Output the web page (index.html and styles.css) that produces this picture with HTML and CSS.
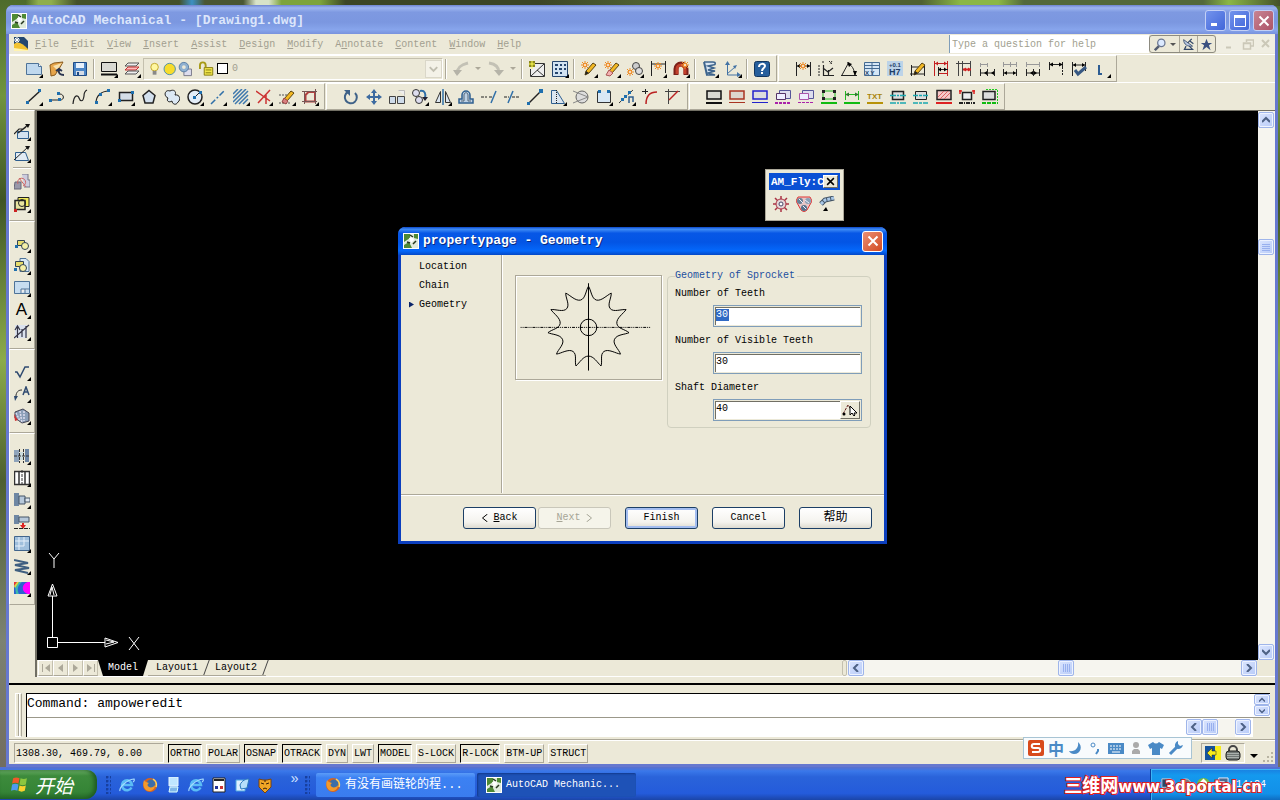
FILE: index.html
```html
<!DOCTYPE html>
<html lang="en">
<head>
    <meta charset="UTF-8">
    <meta name="viewport" content="width=device-width, initial-scale=1.0">
    <title>AutoCAD Mechanical - [Drawing1.dwg]</title>
    <link rel="stylesheet" href="styles.css">
</head>
<body>
    <!-- shared shapes -->
    <svg class="defs" width="0" height="0" aria-hidden="true">
        <symbol id="app" viewBox="0 0 16 16">
            <rect x=".5" y=".5" width="15" height="15" fill="#dfeadb" stroke="#fff"/>
            <path d="M1 1h6v4L1 9zM11 1h4v5l-4-1zM1 12l5-3 3 6H1z" fill="#4e8a35"/>
            <path d="M6 5l4-1 1 3-3 3z" fill="#fff"/>
            <path d="M7 2l3 2M10 11l3-3M4 9l3 1" stroke="#26361f" stroke-width="1.500" fill="none"/>
        </symbol>
        <symbol id="firefox" viewBox="0 0 16 16">
            <circle cx="8" cy="8" r="7" fill="#d9641c"/>
            <circle cx="9" cy="7" r="4.500" fill="#3c6ea8"/>
            <path d="M2 3c1 2 3 2 5 3-2 1-2 3 0 4s5 0 6-2c0 4-3 6-6 6C3 14 0 9 2 3z" fill="#f39a2b"/>
            <path d="M11 2c3 2 4 5 3 8" stroke="#ffd35a" stroke-width="1.500" fill="none"/>
        </symbol>
        <symbol id="ie" viewBox="0 0 16 16">
            <path d="M12.500 10.500A5 5 0 1 1 13 8H4" fill="none" stroke="#5bbcf5" stroke-width="2.600"/>
            <path d="M1 14C0 11 7 3 15 2c1 2-1 3-1 3" fill="none" stroke="#a5dcff" stroke-width="1.200"/>
        </symbol>
        <symbol id="grip-v" viewBox="0 0 8 8">
            <path d="M1.500 0v8M3.500 0v8M5.500 0v8M7.500 0v8" stroke="#98b0ee"/>
        </symbol>
        <symbol id="grip-h" viewBox="0 0 8 8">
            <path d="M0 1.500h8M0 3.500h8M0 5.500h8M0 7.500h8" stroke="#98b0ee"/>
        </symbol>
        <symbol id="left" viewBox="0 0 8 8"><path d="M6 0L2 4l4 4" fill="none" stroke="#4d6185" stroke-width="2"/></symbol>
        <symbol id="right" viewBox="0 0 8 8"><path d="M2 0l4 4-4 4" fill="none" stroke="#4d6185" stroke-width="2"/></symbol>
        <symbol id="up" viewBox="0 0 8 8"><path d="M0 6l4-4 4 4" fill="none" stroke="#4d6185" stroke-width="2"/></symbol>
        <symbol id="down" viewBox="0 0 8 8"><path d="M0 2l4 4 4-4" fill="none" stroke="#4d6185" stroke-width="2"/></symbol>
        <symbol id="close" viewBox="0 0 12 12"><path d="M1.500 1.500l9 9M10.500 1.500l-9 9" stroke="currentColor" stroke-width="2"/></symbol>
        <symbol id="spark" viewBox="0 0 16 16">
            <path d="M4 0v8M0 4h8M1 1l6 6M7 1L1 7" stroke="#ed8a22"/><circle cx="4" cy="4" r="1.500" fill="#fff" stroke="#ed8a22"/>
        </symbol>
        <symbol id="pencil" viewBox="0 0 16 16">
            <path d="M4 14l1-4 7-8 3 2-7 8z" fill="#f3b822" stroke="#5a4410"/><path d="M4 14l1-4 3 2z" fill="#222"/>
        </symbol>
    </svg>

    <main class="window">
        <header class="titlebar">
            <svg class="icon"><use href="#app"/></svg>
            <h1>AutoCAD Mechanical - [Drawing1.dwg]</h1>
            <button class="caption" aria-label="Minimize"><svg viewBox="0 0 12 12"><path d="M1 9.500h6" stroke="#fff" stroke-width="3"/></svg></button>
            <button class="caption" aria-label="Maximize"><svg viewBox="0 0 12 12"><path d="M.5 1v10.500h11V1" fill="none" stroke="#fff"/><path d="M0 1.500h12" stroke="#fff" stroke-width="3"/></svg></button>
            <button class="caption caption-close" aria-label="Close"><svg><use href="#close"/></svg></button>
        </header>

        <nav class="menubar">
            <svg class="icon" viewBox="0 0 16 16"><path d="M1 1h10l4 4v10H1z" fill="#24476f"/><path d="M1 8c4-3 8-1 14 5v2H1z" fill="#f2c230"/><path d="M1 12l14 2v1H1z" fill="#fff3b0"/><path d="M4 1v6M1 4h6M2 2l4 4M6 2L2 6" stroke="#fff"/></svg>
            <button><u>F</u>ile</button>
            <button><u>E</u>dit</button>
            <button><u>V</u>iew</button>
            <button><u>I</u>nsert</button>
            <button><u>A</u>ssist</button>
            <button><u>D</u>esign</button>
            <button><u>M</u>odify</button>
            <button>A<u>n</u>notate</button>
            <button><u>C</u>ontent</button>
            <button><u>W</u>indow</button>
            <button><u>H</u>elp</button>
            <input class="help-box" type="text" placeholder="Type a question for help" aria-label="Type a question for help">
            <div class="help-tools">
                <button class="search" aria-label="Search"><svg viewBox="0 0 16 16"><path d="M6 10l-5 5" stroke="#555d70" stroke-width="3"/><circle cx="9" cy="6" r="4.500" fill="#dceaff" stroke="#6a7690" stroke-width="1.500"/></svg><i class="arrow"></i></button>
                <button aria-label="Communication Center"><svg viewBox="0 0 16 16"><path d="M2 2c0 6 5 9 11 8z" fill="#b9c8e2" stroke="#334868"/><path d="M7 6l5-5M5 10l-2 4h10l-4-4M10 4l4 3" stroke="#334868" stroke-width="1.500" fill="none"/></svg></button>
                <button aria-label="Favorites"><svg viewBox="0 0 16 16"><path d="M8 1l2 5h5l-4 3 2 6-5-4-5 4 2-6-4-3h5z" fill="#3a5080"/></svg></button>
            </div>
            <div class="mdi">
                <button aria-label="Minimize drawing"><svg viewBox="0 0 12 12"><path d="M2 9.500h5" stroke-width="2"/></svg></button>
                <button aria-label="Restore drawing"><svg viewBox="0 0 12 12"><path d="M4.500 4V2h7v6H9M1.500 5h7v6h-7zM1 5.500h8" fill="none" stroke-width="1.500"/></svg></button>
                <button aria-label="Close drawing"><svg viewBox="0 0 12 12"><path d="M2 2l7 7M9 2L2 9" stroke-width="2"/></svg></button>
            </div>
        </nav>

        <div class="toolbars">
            <div class="toolbar">
                <button class="tool more" aria-label="New"><svg viewBox="0 0 16 16"><path d="M.5 2.500h12l3 3v8H.5z" fill="#bfd8ee" stroke="#4e7398"/><path d="M12.500 2.500v3h3" fill="#fff" stroke="#4e7398"/></svg></button>
                <button class="tool" aria-label="Open"><svg viewBox="0 0 16 16"><path d="M1 4l4-2 9-1-4 7-4 6-4 1z" fill="#e6a54a" stroke="#8a5a1c"/><path d="M4 5l9-3-5 7z" fill="#f7e2ae"/><path d="M15 14c-4 0-6-2-5-5M7 10l3-2 3 2" stroke="#2a3550" stroke-width="2" fill="none"/></svg></button>
                <button class="tool" aria-label="Save"><svg viewBox="0 0 16 16"><path d="M1.500 1.500h13v13h-13z" fill="#4c86c6" stroke="#1f4b85"/><path d="M4 2h8v5H4z" fill="#e8f1fb"/><path d="M4 10h8v4H4z" fill="#d5dce6"/><path d="M5 11h2v3H5z" fill="#1f4b85"/></svg></button>
                <span class="sep"></span>
                <button class="tool more" aria-label="Layer state"><svg viewBox="0 0 16 16"><path d="M.5 1.500h15v9H.5z" fill="#d9d9d2" stroke="#111"/><path d="M0 13.500h16" stroke="#111" stroke-width="2"/></svg></button>
                <button class="tool more" aria-label="Layer manager"><svg viewBox="0 0 16 16"><path d="M4 2h11l-3 3H1z" fill="#eee" stroke="#555"/><path d="M4 6h11l-3 3H1z" fill="#fbb" stroke="#c03030"/><path d="M4 10h11l-3 3H1z" fill="#eee" stroke="#555"/></svg></button>
                <div class="layer-box">
                    <svg viewBox="0 0 74 16">
                        <circle cx="8" cy="6" r="4" fill="#fff7a0" stroke="#c0a52a"/><path d="M6 10h4v4H6z" fill="#888"/>
                        <circle cx="24" cy="8" r="6" fill="#f7dc2b" stroke="#4d8ea8"/>
                        <path d="M39 8h8v7h-8z" fill="#dde" stroke="#778"/><circle cx="39" cy="6" r="5" fill="#8fb0d0" stroke="#5a7ea5"/><circle cx="39" cy="6" r="2" fill="#ece9d8"/>
                        <path d="M56 8V4a3 3 0 0 1 6 0v2" stroke="#a79a16" stroke-width="2" fill="none"/><path d="M60.500 6.500h9v8h-9z" fill="#f1e64a" stroke="#857b10"/><path d="M62 9h6M62 12h6" stroke="#857b10"/>
                    </svg>
                    <span class="swatch"></span>
                    <select aria-label="Layer"><option>0</option></select>
                    <svg class="drop" viewBox="0 0 16 16"><path d="M4 6l4 4 4-4" fill="none" stroke="#c0beb0" stroke-width="2"/></svg>
                </div>
                <span class="sep"></span>
                <button class="tool" aria-label="Undo"><svg viewBox="0 0 16 16"><path d="M4 13c0-6 3-9 11-11" fill="none" stroke="#c3c1b5" stroke-width="3"/><path d="M0 9h9l-5 6z" fill="#b5b3a8"/></svg></button><button class="tool-drop" aria-label="Undo list"><i class="arrow"></i></button>
                <button class="tool" aria-label="Redo"><svg viewBox="0 0 16 16"><path d="M1 2c8 1 10 5 10 10" fill="none" stroke="#c3c1b5" stroke-width="3"/><path d="M6 9h10l-5 6z" fill="#b5b3a8"/></svg></button><button class="tool-drop" aria-label="Redo list"><i class="arrow"></i></button>
                <span class="sep"></span>
                <button class="tool" aria-label="Power snap"><svg viewBox="0 0 16 16"><path d="M5.500 2.500h10v13H1.500V8" fill="#eee" stroke="#333"/><path d="M2 15L15 3M8 9l7 6" stroke="#333"/><path d="M0 0h6v6H0z" fill="#8b861d"/><path d="M0 3h6M3 0v8" stroke="#ff5"/></svg></button>
                <button class="tool more" aria-label="Calculator"><svg viewBox="0 0 16 16"><path d="M.5.5h15v15H.5z" fill="#d2e3f2" stroke="#26466e"/><path d="M3 3h3v2H3zM8 3h2v2H8zM12 3h2v2h-2zM3 7h2v2H3zM7 7h3v2H7zM12 7h2v2h-2zM3 11h3v2H3zM8 11h2v2H8z" fill="#26466e"/></svg></button>
                <span class="sep"></span>
                <button class="tool more" aria-label="Power edit"><svg viewBox="0 0 16 16"><use href="#pencil"/><use href="#spark"/></svg></button>
                <button class="tool more" aria-label="Power erase"><svg viewBox="0 0 16 16"><use href="#pencil"/><path d="M2 14l3-5 4 3-3 3z" fill="#f4b0b0" stroke="#a55"/><use href="#spark"/></svg></button>
                <button class="tool more" aria-label="Power copy"><svg viewBox="0 0 16 16"><circle cx="9" cy="5" r="3.500" fill="#ccc" stroke="#444"/><circle cx="12" cy="10" r="3.500" fill="#ddd" stroke="#444"/><use href="#spark" x="-1" y="7"/></svg></button>
                <button class="tool more" aria-label="Power dimension"><svg viewBox="0 0 16 16"><path d="M1.500 0v15M15.500 0v12M2 3h13" stroke="#222"/><use href="#spark" x="4" y="1"/></svg></button>
                <button class="tool more" aria-label="Power recall"><svg viewBox="0 0 16 16"><path d="M3 14V8a5 5 0 0 1 10 0v6" fill="none" stroke="#7c2018" stroke-width="5"/><path d="M4 13V8a4 4 0 0 1 8 0v5" fill="none" stroke="#c2402c" stroke-width="3"/><use href="#spark" x="8"/></svg></button>
                <span class="sep"></span>
                <button class="tool more" aria-label="Structure"><svg viewBox="0 0 16 16"><path d="M2 1h9c3 0 3 3 0 3l-5 1 6 2-6 2 7 1-7 2 7 2H4" fill="#d8e5f2" stroke="#3e648c" stroke-width="1.500"/><path d="M2 1l3 13" stroke="#3e648c" stroke-width="2"/></svg></button>
                <button class="tool more" aria-label="UCS"><svg viewBox="0 0 16 16"><path d="M2.500 2v12H14M2 13l8-7" stroke="#4373a5" fill="none"/><path d="M0 4l2.500-4L5 4zM12 11l4 3-4 2zM8 5l4-1-2 4z" fill="#4373a5"/></svg></button>
                <span class="sep"></span>
                <button class="tool" aria-label="Help"><svg viewBox="0 0 16 16"><rect x=".5" y=".5" width="15" height="15" rx="2" fill="#265f9c" stroke="#12365f"/><path d="M5 6c0-4 6-4 6-1 0 2-3 2-3 5M8 11v2" stroke="#fff" stroke-width="2" fill="none"/></svg></button>
            </div>
            <div class="toolbar">
                <button class="tool" aria-label="Power dimensioning"><svg viewBox="0 0 16 16"><path d="M1.500 1v14M15.500 1v14M2 5h13" stroke="#222"/><path d="M2 5l3-2v4zM15 5l-3-2v4z"/><use href="#spark" x="4" y="1"/></svg></button>
                <button class="tool" aria-label="Multiple dimensions"><svg viewBox="0 0 16 16"><path d="M5.500 4v11M5 14.500h11M5 7l5 4 5-4M10.500 9v5" stroke="#222" fill="none" stroke-width="1.200"/><path d="M5 0v3M14 0l-2 3M11 0l3 3M1 4v11" stroke="#222" stroke-dasharray="2 1"/></svg></button>
                <button class="tool" aria-label="Angle dimension"><svg viewBox="0 0 16 16"><path d="M0 14.500h16M1 14L8 1M7 3c4 1 6 5 7 11" stroke="#222" fill="none"/><path d="M6 1l5 2-3 3zM12 10h4l-2 5z"/></svg></button>
                <button class="tool" aria-label="Coordinate table"><svg viewBox="0 0 16 16"><path d="M.5 1.500h15v13H.5z" fill="#d5e6f5" stroke="#456b92"/><path d="M0 4.500h16M0 7.500h16M8 1v13" stroke="#456b92"/><text x="1" y="14">X Y</text></svg></button>
                <button class="tool" aria-label="Fits list"><svg viewBox="0 0 16 16"><path d="M0 0h16v15H0z" fill="#bcd3e8"/><text x="2" y="6">+0.1</text><text class="big" x="2" y="14">H7</text></svg></button>
                <button class="tool" aria-label="Edit dimension"><svg viewBox="0 0 16 16"><path d="M1.500 4v11M14.500 4v11M1 6h14M0 13h15" stroke="#222"/><use href="#pencil"/></svg></button>
                <button class="tool" aria-label="Arrange dimensions"><svg viewBox="0 0 16 16"><path d="M1.500 0v15M14.500 0v15M2 2.500h12M5 12.500h9" stroke="#c32020"/><path d="M5.500 6v9M5 8.500h10" stroke="#222"/><path d="M2 2.500l3-2v4zM14 2.500l-3-2v4z" fill="#c32020"/><path d="M5 8.500l3-2v4zM14 8.500l-3-2v4z"/></svg></button>
                <button class="tool" aria-label="Align dimensions"><svg viewBox="0 0 16 16"><path d="M2.500 0v15M6.500 0v15M14.500 0v15M0 2.500h14" stroke="#444"/><path d="M7 8.500h8" stroke="#d02020" stroke-width="2"/><path d="M7 8.500l3-2v4zM15 8.500l-3-2v4z" fill="#d02020"/></svg></button>
                <button class="tool" aria-label="Insert dimension"><svg viewBox="0 0 16 16"><path d="M1.500 2v4M8.500 2v4M1 3.500h8" stroke="#999"/><path d="M1.500 8v7M8.500 8v7M15.500 8v7M1 12h14" stroke="#222"/><path d="M5 12l3-2v4zM12 12l3-2v4z"/></svg></button>
                <button class="tool" aria-label="Join dimension"><svg viewBox="0 0 16 16"><path d="M1.500 1v5M8.500 1v5M14.500 1v5M1 3.500h14" stroke="#999"/><path d="M1.500 8v7M14.500 8v7M1 12h14" stroke="#222"/><path d="M2 12l3-2v4zM14 12l-3-2v4z"/></svg></button>
                <button class="tool" aria-label="Break dimension"><svg viewBox="0 0 16 16"><path d="M1.500 1v5M14.500 1v5M1 3.500h14" stroke="#999"/><path d="M1.500 8v7M8.500 8v7M14.500 8v7M1 12h14" stroke="#222"/><path d="M5 12l3-2v4zM12 12l-3-2v4z"/></svg></button>
                <button class="tool" aria-label="Linear dimension"><svg viewBox="0 0 16 16"><path d="M1.500 1v8M14.500 1v7M1 3.500h14" stroke="#222"/><path d="M14.500 9v6" stroke="#222" stroke-dasharray="2 1"/><path d="M1 3.500l4-2v4zM15 3.500l-4-2v4z"/></svg></button>
                <button class="tool" aria-label="Check dimensions"><svg viewBox="0 0 16 16"><path d="M1.500 1v14M14.500 1v9M1 4h14" stroke="#222"/><path d="M2 4l3-2v4zM14 4l-3-2v4z"/><path d="M4 9l3 4 8-7" fill="none" stroke="#385983" stroke-width="3"/></svg></button>
                <button class="tool more" aria-label="Leader"><svg viewBox="0 0 16 16"><path d="M5 4v9h3" stroke="#2d5d93" stroke-width="2" fill="none"/></svg></button>
            </div>
        </div>

        <div class="toolbars">
            <div class="toolbar">
                <button class="tool more" aria-label="Line"><svg viewBox="0 0 16 16"><path d="M2 13L14 2" stroke="#222" stroke-width="1.500"/><path class="node" d="M0 12h3v3H0zM12 0h3v3h-3z"/></svg></button>
                <button class="tool" aria-label="Polyline"><svg viewBox="0 0 16 16"><path d="M1 11h10c5 0 4-6 0-6H9" stroke="#222" fill="none"/><path class="node" d="M0 10h3v3H0zM9 9h3v3H9zM8 3h3v3H8z"/></svg></button>
                <button class="tool" aria-label="Spline"><svg viewBox="0 0 16 16"><path d="M1 15C2 5 6 6 7 9s4 5 5-2c0-4 1-5 3-6" stroke="#222" fill="none" stroke-width="1.200"/></svg></button>
                <button class="tool more" aria-label="Arc"><svg viewBox="0 0 16 16"><path d="M1 14C1 7 6 2 14 2" stroke="#222" fill="none" stroke-width="1.200"/><path class="node" d="M0 12h3v3H0zM4 4h3v3H4zM12 0h3v3h-3z"/></svg></button>
                <button class="tool more" aria-label="Rectangle"><svg viewBox="0 0 16 16"><path d="M1.500 3.500h13v8h-13z" fill="#d5dee8" stroke="#222" stroke-width="1.500"/><path class="node" d="M0 10h3v3H0zM13 2h3v3h-3z"/></svg></button>
                <button class="tool" aria-label="Polygon"><svg viewBox="0 0 16 16"><path d="M8 1.500l6 5-2 7.500H4L2 6.500z" fill="#d3e0ee" stroke="#222" stroke-width="1.500"/></svg></button>
                <button class="tool" aria-label="Revision cloud"><svg viewBox="0 0 16 16"><path d="M4 9C-1 7 1 0 6 2c3-2 7 0 5 4 5-1 6 5 3 7-2 4-6 2-6-1-3 2-6 0-4-3z" fill="#dce8f4" stroke="#222"/></svg></button>
                <button class="tool more" aria-label="Circle"><svg viewBox="0 0 16 16"><circle cx="8" cy="8" r="7" fill="#e3edf7" stroke="#222" stroke-width="1.500"/><path d="M8 8l5-5" stroke="#222"/><path class="node" d="M6 7h3v3H6zM12 2h3v3h-3z"/></svg></button>
                <button class="tool more" aria-label="Construction line"><svg viewBox="0 0 16 16"><path d="M1 15L15 1" stroke="#2f6fa8" stroke-width="1.500" stroke-dasharray="6 2 2 2"/></svg></button>
                <button class="tool more" aria-label="Hatch"><svg viewBox="0 0 16 16"><path d="M0 5l5-5M0 9l9-9M0 13L13 0M2 15L15 2M6 15l9-9M10 15l5-5" stroke="#3d77ad" stroke-width="1.500"/></svg></button>
                <button class="tool more" aria-label="Trim lines"><svg viewBox="0 0 16 16"><path d="M0 2l14 10M14 1L2 14M10 6v9" stroke="#c33" stroke-width="1.500"/></svg></button>
                <button class="tool more" aria-label="Erase"><svg viewBox="0 0 16 16"><path d="M0 6h8M0 14h12" stroke="#555" stroke-dasharray="2 1"/><use href="#pencil"/><path d="M3 13l2-4 4 3-2 3z" fill="#d98080" stroke="#944"/></svg></button>
                <button class="tool more" aria-label="Contour"><svg viewBox="0 0 16 16"><path d="M3.500 12.500V6l3-3h6.500v9.500z" fill="none" stroke="#b04040" stroke-width="2"/><path d="M0 2.500h15M13.500 0v15M2.500 2v13M0 12.500h15" stroke="#755"/></svg></button>
            </div>
            <div class="toolbar">
                <button class="tool" aria-label="Rotate"><svg viewBox="0 0 16 16"><path d="M5 3a6 6 0 1 0 7 1" fill="none" stroke="#3f6288" stroke-width="2"/><path d="M1 1h6v6z" fill="#3f6288"/></svg></button>
                <button class="tool" aria-label="Move"><svg viewBox="0 0 16 16"><path d="M8 2v12M2 8h12" stroke="#3c6aa0" stroke-width="2"/><path d="M8 0l3 4H5zM8 16l3-4H5zM0 8l4-3v6zM16 8l-4-3v6z" fill="#3c6aa0"/></svg></button>
                <button class="tool" aria-label="Scale"><svg viewBox="0 0 16 16"><path d="M.5 7.500h6v7h-6zM8.500 7.500h7v7h-7z" fill="#cfdcea" stroke="#444"/><path d="M9.500 1.500h6v5" fill="#eee" stroke="#bbb"/></svg></button>
                <button class="tool more" aria-label="Copy"><svg viewBox="0 0 16 16"><circle cx="4" cy="4" r="3.500" fill="#dde" stroke="#333"/><circle cx="7" cy="11" r="3.500" fill="#dde" stroke="#333"/><path d="M8 2c5-1 6 3 5 7" stroke="#2f6fa8" stroke-width="2" fill="none"/><path d="M10 8h6l-3 4z" fill="#223"/></svg></button>
                <button class="tool more" aria-label="Mirror"><svg viewBox="0 0 16 16"><path d="M.5 13.500l5-11v11zM15.500 13.500l-5-11v11z" fill="#dce6f0" stroke="#333"/><path d="M8 0v16" stroke="#2f6fa8" stroke-width="1.500"/></svg></button>
                <button class="tool" aria-label="Offset"><svg viewBox="0 0 16 16"><path d="M1 14v-4h3V6a4 4 0 0 1 8 0v4h3v4z" fill="#bcd1e6" stroke="#2f5f8f" stroke-width="1.500"/><path d="M3 12h3V6c0-3 4-3 4 0v6h3" fill="none" stroke="#567"/></svg></button>
                <button class="tool" aria-label="Extend"><svg viewBox="0 0 16 16"><path d="M0 8h6M8 8h3" stroke="#222" stroke-dasharray="3 1"/><path d="M10 14l5-12" stroke="#2f6fa8" stroke-width="1.500"/></svg></button>
                <button class="tool" aria-label="Trim"><svg viewBox="0 0 16 16"><path d="M0 8h5M8 8h8" stroke="#222" stroke-dasharray="3 1"/><path d="M4 14L9 2" stroke="#2f6fa8" stroke-width="1.500"/></svg></button>
                <button class="tool" aria-label="Lengthen"><svg viewBox="0 0 16 16"><path d="M1 15L14 2" stroke="#222" stroke-width="1.500"/><path class="node" d="M0 13h3v3H0zM12 0h4v4h-4z"/></svg></button>
                <button class="tool more" aria-label="Stretch"><svg viewBox="0 0 16 16"><path d="M1.500 1.500h5l8 13h-13z" fill="#dce6f0" stroke="#2f5f8f"/><path d="M6.500 1v14" stroke="#222" stroke-dasharray="1 1"/></svg></button>
                <button class="tool" aria-label="Break"><svg viewBox="0 0 16 16"><circle cx="9" cy="8" r="6" fill="#ddd" stroke="#666"/><path d="M0 2l15 6L0 14" stroke="#888" fill="none"/></svg></button>
                <button class="tool more" aria-label="Join"><svg viewBox="0 0 16 16"><path d="M4 2.500H1.500v11h13v-11H12" fill="#d8e8f5" stroke="#333"/><path class="node" d="M2 1h3v3H2zM11 1h3v3h-3z"/></svg></button>
                <button class="tool more" aria-label="Array"><svg viewBox="0 0 16 16"><path d="M0 14L14 1" stroke="#333" stroke-dasharray="3 1"/><path d="M10 14V8h4v5" stroke="#2f5f8f" fill="none" stroke-width="1.500"/><path class="node" d="M2 9h3v3H2zM5 6h3v3H5zM9 2h3v3H9z"/></svg></button>
                <button class="tool" aria-label="Fillet"><svg viewBox="0 0 16 16"><path d="M0 2.500h6M3.500 0v5" stroke="#222"/><path d="M4 15c0-8 3-12 11-12" fill="none" stroke="#b22" stroke-width="1.500"/></svg></button>
                <button class="tool" aria-label="Chamfer"><svg viewBox="0 0 16 16"><path d="M0 2.500h15M3.500 0v15" stroke="#444"/><path d="M4 11l9-9" stroke="#b22" stroke-width="1.500"/></svg></button>
            </div>
            <div class="toolbar">
                <button class="tool" aria-label="Contour layer"><svg viewBox="0 0 16 16"><path d="M1 2h14v8H1z" fill="#d9d9d2" stroke="#111" stroke-width="1.500"/><path d="M0 14h16" stroke="#111" stroke-width="2"/></svg></button>
                <button class="tool" aria-label="Section layer"><svg viewBox="0 0 16 16"><path d="M1 2h14v8H1z" fill="#ddd5cc" stroke="#a93422" stroke-width="1.500"/><path d="M0 13.500h16" stroke="#a93422"/></svg></button>
                <button class="tool" aria-label="Thread layer"><svg viewBox="0 0 16 16"><path d="M1 2h14v8H1z" fill="#ddd" stroke="#22c" stroke-width="1.500"/><path d="M0 13.500h16" stroke="#22c"/></svg></button>
                <button class="tool" aria-label="Hidden layer"><svg viewBox="0 0 16 16"><path d="M4.500 1.500h11v8h-11z" fill="#dde" stroke="#559"/><path d="M1.500 4.500h9v6h-9z" fill="#eef" stroke="#536"/><path d="M0 14h16" stroke="#a2a" stroke-width="2" stroke-dasharray="3 1"/></svg></button>
                <button class="tool" aria-label="Hidden narrow layer"><svg viewBox="0 0 16 16"><path d="M4.500 1.500h11v8h-11z" fill="#dde" stroke="#559"/><path d="M1.500 4.500h9v6h-9z" fill="#eef" stroke="#a5a"/><path d="M0 13.500h16" stroke="#a2a" stroke-dasharray="3 1"/></svg></button>
                <button class="tool" aria-label="Frame layer"><svg viewBox="0 0 16 16"><path d="M2 2h12v8H2z" fill="none" stroke="#2b2"/><path d="M1 1h3v3H1zM12 1h3v3h-3zM1 8h3v3H1zM12 8h3v3h-3z" fill="#222"/><path d="M0 14h16" stroke="#1b1" stroke-width="2"/></svg></button>
                <button class="tool" aria-label="Dimension layer"><svg viewBox="0 0 16 16"><path d="M1.500 2v9M14.500 2v9M1 5.500h14" stroke="#2b2"/><path d="M1 5.500l4-2v4zM15 5.500l-4-2v4z" fill="#373"/><path d="M0 14h16" stroke="#1b1" stroke-width="2"/></svg></button>
                <button class="tool" aria-label="Text layer"><svg viewBox="0 0 16 16"><text class="txt" x="0" y="10">TXT</text><path d="M0 14h16" stroke="#b79208" stroke-width="2"/></svg></button>
                <button class="tool" aria-label="Centerline layer"><svg viewBox="0 0 16 16"><path d="M2.500 2.500h11v8h-11z" fill="#ddd" stroke="#222" stroke-width="1.500"/><path d="M0 6.500h16M0 14h16" stroke="#1aa8b0" stroke-width="1.500" stroke-dasharray="6 1 2 1"/></svg></button>
                <button class="tool" aria-label="Centerline narrow layer"><svg viewBox="0 0 16 16"><path d="M2.500 2.500h11v8h-11z" fill="#ddd" stroke="#222"/><path d="M0 6.500h16M0 14h16" stroke="#1aa8b0" stroke-width="1.500" stroke-dasharray="5 1 3 1"/></svg></button>
                <button class="tool" aria-label="Hatch layer"><svg viewBox="0 0 16 16"><path d="M1 1.500h14v9H1z" fill="#f6caca" stroke="#222" stroke-width="1.500"/><path d="M2 8l6-6M4 10l8-8M8 10l6-6" stroke="#d66"/><path d="M0 14h16" stroke="#d22" stroke-width="2"/></svg></button>
                <button class="tool" aria-label="Section line layer"><svg viewBox="0 0 16 16"><path d="M3.500 3.500h9v7h-9z" fill="#eee" stroke="#222" stroke-width="1.500"/><path d="M1 1v4M15 1v4M0 2h3M13 2h3" stroke="#d22" stroke-width="1.500"/><path d="M0 14h16" stroke="#222" stroke-width="2" stroke-dasharray="4 1 1 1"/></svg></button>
                <button class="tool" aria-label="Phantom layer"><svg viewBox="0 0 16 16"><path d="M4 .5h11.500v12" fill="none" stroke="#2c2" stroke-dasharray="2 1"/><path d="M1 2.500h12v8H1z" fill="#ddd" stroke="#222" stroke-width="1.500"/><path d="M0 14h16" stroke="#1b1" stroke-width="2" stroke-dasharray="4 1"/></svg></button>
            </div>
        </div>

        <div class="workspace">
            <aside class="dock">
                <div class="dock-group">
                    <button class="tool more" aria-label="Zoom"><svg viewBox="0 0 16 16"><path d="M3.500 7.500h11v7h-11z" fill="#d3e2f0" stroke="#2f5f8f"/><path d="M0 10l5-5h4l6-5M4 9l8-6" stroke="#222" stroke-width="1.200" fill="none"/><path d="M11 0h5l-2 4z" fill="#111"/></svg></button>
                    <button class="tool more" aria-label="Pan"><svg viewBox="0 0 16 16"><path d="M1.500 6.500h10l3 8h-13z" fill="#e3ecf4" stroke="#2f5f8f"/><path d="M0 14L14 1" stroke="#222"/><path d="M11 0h5l-2 4z" fill="#111"/></svg></button>
                    <span class="sep-h"></span>
                    <button class="tool" aria-label="Associate"><svg viewBox="0 0 16 16"><path d="M8 0h6v6h2v7h-6" fill="#ccd" stroke="#778"/><path d="M1 8h6v7H0z" fill="#99a" stroke="#667"/><path d="M5 4l7 9M4 10a4 4 0 1 1 5 2" stroke="#c66" fill="none"/></svg></button>
                    <button class="tool more" aria-label="Hide situation"><svg viewBox="0 0 16 16"><path d="M4 1.500h11v9H4z" fill="#f1ea5b" stroke="#222"/><path d="M1 4.500h10v9H1z" fill="#e8e4a0" stroke="#222" stroke-width="1.500"/><circle cx="8" cy="7" r="3.500" fill="none" stroke="#222"/><path d="M0 13h3v3H0z" fill="#c22"/></svg></button>
                </div>
                <div class="dock-group">
                    <button class="tool more" aria-label="Insert block"><svg viewBox="0 0 16 16"><path d="M3.500 4.500h7v5h-7z" fill="#e6dc6c" stroke="#345"/><circle cx="11" cy="10" r="3.500" fill="#f4f0a8" stroke="#345"/><path class="node" d="M1 9h3v3H1z"/></svg></button>
                    <button class="tool more" aria-label="Make block"><svg viewBox="0 0 16 16"><path d="M6 .5h6l3 3v10H6z" fill="#d7e8f5" stroke="#4e7398"/><path d="M1.500 3.500h8v5h-8z" fill="#e6dc6c" stroke="#345"/><circle cx="9" cy="10" r="3.500" fill="#f4f0a8" stroke="#345"/><path class="node" d="M0 10h3v3H0z"/></svg></button>
                    <button class="tool more" aria-label="Title border"><svg viewBox="0 0 16 16"><path d="M.5 1.500h15v12H.5z" fill="#c7ddf0" stroke="#4e7398"/><path d="M7 13V9h8M11 9v4" stroke="#4e7398" fill="#eee"/></svg></button>
                    <button class="tool more letter" aria-label="Text">A</button>
                    <button class="tool more" aria-label="Detail view"><svg viewBox="0 0 16 16"><path d="M1 1h12v13H1z" fill="#dbe2ee"/><path d="M3.500 3v11M1 6l2.500-4L6 6M0 14L15 1M8 5v8M12 2v12" stroke="#334" fill="none" stroke-width="1.200"/></svg></button>
                </div>
                <div class="dock-group">
                    <button class="tool more" aria-label="Surface texture"><svg viewBox="0 0 16 16"><path d="M1 8h2l3 5 5-10h4" fill="none" stroke="#2f4a70" stroke-width="1.500"/></svg></button>
                    <button class="tool more" aria-label="Leader note"><svg viewBox="0 0 16 16"><path d="M2 12V9c1-4 3-5 6-5" fill="none" stroke="#333"/><path d="M0 10h4l-3 5z" fill="#2f4a70"/><path d="M9 9l3-8 3 8M10 6h4" stroke="#2f4a70" stroke-width="1.500" fill="none"/></svg></button>
                    <button class="tool more" aria-label="Part reference"><svg viewBox="0 0 16 16"><path d="M1 4l8-3 6 4v8l-7 2-7-5z" fill="#8b9fb8" stroke="#445"/><path d="M2 5l4 8M6 3l2 12M10 3v10" stroke="#dde" stroke-width="1.500" stroke-dasharray="2 1"/><path d="M0 6l4 6-3 1z" fill="#c33"/></svg></button>
                </div>
                <div class="dock-group">
                    <button class="tool more" aria-label="Screw connection"><svg viewBox="0 0 16 16"><path d="M0 2h5v12H0z" fill="#8fa4bb"/><path d="M6 4h4v8H6z" fill="#cdd"/><path d="M11 1h4v13h-4z" fill="#6d87a5"/><path d="M0 8h16M5.500 1v14M9.500 1v14" stroke="#333" stroke-dasharray="3 1"/></svg></button>
                    <button class="tool more" aria-label="Holes"><svg viewBox="0 0 16 16"><path d="M.5 1.500h15v13H.5z" fill="#fff" stroke="#333" stroke-width="1.500"/><path d="M5 1v13M11 1v13" stroke="#333" stroke-width="1.500"/><path d="M8 0v16" stroke="#333" stroke-dasharray="3 1"/></svg></button>
                    <button class="tool more" aria-label="Shaft generator"><svg viewBox="0 0 16 16"><path d="M0 1h5v13H0z" fill="#6e87a3"/><path d="M5 4h6v8H5z" fill="#b6c8da" stroke="#456"/><path d="M11 6h5v4h-5z" fill="#dde6ee" stroke="#456"/></svg></button>
                    <button class="tool" aria-label="Bearing calculation"><svg viewBox="0 0 16 16"><path d="M0 1h5v9H0z" fill="#6e87a3"/><path d="M5 3h10v5H5z" fill="#b6c8da" stroke="#456"/><path d="M9 9v4" stroke="#d22" stroke-width="2"/><path d="M6 11h6l-3 4z" fill="#d22"/><path d="M0 14.500h16" stroke="#222" stroke-dasharray="4 1"/></svg></button>
                    <button class="tool more" aria-label="Steel shapes"><svg viewBox="0 0 16 16"><path d="M.5.5h15v14H.5z" fill="#9fbfdc" stroke="#41658c"/><path d="M1 10h9V1M5 1v13M1 5h14" fill="none" stroke="#e6f0fa"/></svg></button>
                    <button class="tool more" aria-label="Springs"><svg viewBox="0 0 16 16"><path d="M0 2l14 3L1 7l14 3-14 2 13 3" fill="none" stroke="#3f5f80" stroke-width="2"/></svg></button>
                    <button class="tool more" aria-label="FEA"><svg viewBox="0 0 16 16"><path d="M0 2h16v12H0z" fill="#2b62cf"/><path d="M0 2h3L0 6z" fill="#e33"/><path d="M1 6l4-4h3c-5 4-5 8-3 12H2z" fill="#3db8ac"/><path d="M0 6l3-4h2L1 8z" fill="#e8d33a"/><path d="M16 2c-7-1-11 9-2 12h2z" fill="#f0f"/></svg></button>
                </div>
            </aside>

            <div class="viewport">
                <div class="canvas-row">
                    <div class="canvas">
                        <svg class="ucs" viewBox="0 0 94 98" fill="none" stroke="#fff">
                            <path d="M.5 84.500h10v10h-10zM5.500 84V43M11 89.500h47M1 43l4.500-12L10 43zM58 85l13 4.500L58 94zM3 42l2-8 2 8M59 87l8 2-8 2"/>
                            <path d="M2 0l5 6 5-6M7 6v9M82 84l10 13M92 84L82 97"/>
                        </svg>

                        <section class="palette">
                            <div class="palette-title"><span>AM_Fly:C</span><button aria-label="Close palette"><svg><use href="#close"/></svg></button></div>
                            <div class="palette-tools">
                                <button class="tool" aria-label="Sprocket"><svg viewBox="0 0 16 16"><path d="M8 0v16M0 8h16M2 2l12 12M14 2L2 14" stroke="#a34" stroke-width="1.500"/><circle cx="8" cy="8" r="5" fill="#e5d5d8" stroke="#a34"/><circle cx="8" cy="8" r="2" fill="#fff" stroke="#446"/></svg></button>
                                <button class="tool" aria-label="Belt"><svg viewBox="0 0 16 16"><path d="M2 1h12l2 4-5 9-3 2-3-2L0 5z" fill="#e7c6c6" stroke="#d33"/><circle cx="4" cy="5" r="3" fill="#667f95"/><circle cx="12" cy="5" r="3" fill="#8aa0b5"/><circle cx="8" cy="12" r="3" fill="#56708a"/><path d="M3 3l4 4M9 4l4 3M7 10l3 3" stroke="#eef"/></svg></button>
                                <button class="tool" aria-label="Chain"><svg viewBox="0 0 16 16"><path d="M2 8l4-4 9-2" stroke="#456" stroke-width="5" fill="none"/><path d="M2 8l4-4 9-2" stroke="#a9c8e8" stroke-width="3" stroke-dasharray="3 1" fill="none"/><path d="M4 15l3-4 2 4z"/></svg></button>
                            </div>
                        </section>

                        <form class="dialog">
                            <header class="dialog-title">
                                <svg class="icon"><use href="#app"/></svg>
                                <h2>propertypage - Geometry</h2>
                                <button type="button" class="dialog-close" aria-label="Close"><svg><use href="#close"/></svg></button>
                            </header>
                            <div class="dialog-body">
                                <ul class="pages">
                                    <li><a href="#location">Location</a></li>
                                    <li><a href="#chain">Chain</a></li>
                                    <li class="current"><a href="#geometry">Geometry</a></li>
                                </ul>
                                <div class="page">
                                    <div class="preview">
                                        <svg viewBox="361 166 440 314" fill="none" stroke="#000" stroke-width="3">
                                            <path d="M581 197C589 209 590 235 605 239C620 243 637 224 650 218C651 232 637 253 647 265C657 277 681 266 695 268C687 280 665 294 667 310C669 326 693 328 704 338C691 344 667 343 660 358C653 373 674 389 678 403C664 401 641 386 628 395C615 404 624 425 619 439C608 429 597 409 581 409C565 409 554 429 543 439C538 425 547 404 534 395C521 386 498 401 484 403C488 389 509 373 502 358C495 343 471 344 458 338C469 328 493 326 495 310C497 294 475 280 467 268C481 266 505 277 515 265C525 253 511 232 512 218C525 224 542 243 557 239C572 235 573 209 581 197z"/>
                                            <circle cx="581" cy="322" r="25"/>
                                            <path d="M581 188v265"/>
                                            <path d="M375 322h394" stroke-dasharray="3 3 3 3 9 3"/>
                                        </svg>
                                    </div>
                                    <fieldset>
                                        <legend>Geometry of Sprocket</legend>
                                        <label for="teeth">Number of Teeth</label>
                                        <div class="field"><input id="teeth" class="selected" type="text" value="30"></div>
                                        <label for="visible">Number of Visible Teeth</label>
                                        <div class="field"><input id="visible" type="text" value="30"></div>
                                        <label for="shaft">Shaft Diameter</label>
                                        <div class="field">
                                            <input id="shaft" type="text" value="40">
                                            <button type="button" aria-label="Pick diameter"><svg viewBox="0 0 16 12"><path d="M1 10l5-9 6 9" fill="none" stroke="#622" stroke-dasharray="3 1"/><path d="M8 2v9l2-2 2 3 1-1-1-2h3z" fill="#fff" stroke="#000"/><circle cx="2" cy="10" r="1.500"/></svg></button>
                                        </div>
                                    </fieldset>
                                </div>
                            </div>
                            <footer class="dialog-buttons">
                                <button type="button"><svg viewBox="0 0 8 8"><path d="M6.500 0l-5 4 5 4"/></svg><span><u>B</u>ack</span></button>
                                <button type="button" disabled><span><u>N</u>ext</span><svg viewBox="0 0 8 8"><path d="M1.500 0l5 4-5 4"/></svg></button>
                                <button type="button" class="default">Finish</button>
                                <button type="button">Cancel</button>
                                <button type="button" class="cjk" lang="zh">帮助</button>
                            </footer>
                        </form>
                    </div>
                    <div class="vscroll">
                        <button class="sb" aria-label="Scroll up"><svg><use href="#up"/></svg></button>
                        <span class="above"></span>
                        <button class="sb" aria-label="Vertical thumb"><svg><use href="#grip-h"/></svg></button>
                        <span class="below"></span>
                        <button class="sb" aria-label="Scroll down"><svg><use href="#down"/></svg></button>
                    </div>
                </div>

                <div class="tabs">
                    <div class="tab-nav">
                        <button aria-label="First tab"><svg viewBox="0 0 10 10"><path d="M1 1h1v8H1zM9 1v8L4 5z"/></svg></button>
                        <button aria-label="Previous tab"><svg viewBox="0 0 10 10"><path d="M7 1v8L2 5z"/></svg></button>
                        <button aria-label="Next tab"><svg viewBox="0 0 10 10"><path d="M2 1v8l5-4z"/></svg></button>
                        <button aria-label="Last tab"><svg viewBox="0 0 10 10"><path d="M8 1h1v8H8zM1 1v8l5-4z"/></svg></button>
                    </div>
                    <button class="tab active">Model</button>
                    <button class="tab">Layout1</button>
                    <button class="tab">Layout2</button>
                    <div class="hscroll">
                        <span class="splitter"></span>
                        <button class="sb" aria-label="Scroll left"><svg><use href="#left"/></svg></button>
                        <span class="before"></span>
                        <button class="sb" aria-label="Horizontal thumb"><svg><use href="#grip-v"/></svg></button>
                        <span class="after"></span>
                        <button class="sb" aria-label="Scroll right"><svg><use href="#right"/></svg></button>
                    </div>
                </div>
            </div>
        </div>

        <section class="command">
            <div class="command-grip"></div>
            <div class="command-box">
                <div class="command-history">
                    <output>Command: ampoweredit</output>
                    <div class="mini-scroll">
                        <button class="sb" aria-label="History up"><svg><use href="#up"/></svg></button>
                        <button class="sb" aria-label="History down"><svg><use href="#down"/></svg></button>
                    </div>
                </div>
                <div class="command-line">
                    <input type="text" aria-label="Command line">
                    <button class="sb" aria-label="Command left"><svg><use href="#left"/></svg></button>
                    <button class="sb" aria-label="Command thumb"><svg><use href="#grip-v"/></svg></button>
                    <span class="track"></span>
                    <button class="sb" aria-label="Command right"><svg><use href="#right"/></svg></button>
                </div>
            </div>
        </section>

        <footer class="statusbar">
            <div class="coords">1308.30, 469.79, 0.00</div>
            <button class="on">ORTHO</button>
            <button>POLAR</button>
            <button class="on">OSNAP</button>
            <button class="on">OTRACK</button>
            <button>DYN</button>
            <button>LWT</button>
            <button class="on">MODEL</button>
            <button>S-LOCK</button>
            <button class="on">R-LOCK</button>
            <button>BTM-UP</button>
            <button>STRUCT</button>
            <div class="status-tray">
                <svg viewBox="0 0 16 16"><path d="M0 1h10v14H0z" fill="#15539c"/><path d="M10 1h6v14h-6z" fill="#f7ec1b"/><path d="M7 3v3h4v4H7v3L2 8z" fill="#f7ec1b" stroke="#222" stroke-width=".5"/></svg>
                <svg viewBox="0 0 16 16"><path d="M4 8V5a4 4 0 0 1 8 0v3" fill="none" stroke="#444" stroke-width="2"/><rect x="1" y="6" width="14" height="9" rx="3" fill="#707674" stroke="#222"/><path d="M2 8.500h12M2 10.500h12M2 12.500h12" stroke="#aab0ad"/></svg>
            </div>
            <i class="arrow arrow-big"></i>
            <svg class="resize" viewBox="0 0 12 12"><path d="M9 1h2v2H9zM5 5h2v2H5zM9 5h2v2H9zM1 9h2v2H1zM5 9h2v2H5zM9 9h2v2H9z" fill="#b8b4a2"/></svg>
        </footer>
    </main>

    <div class="ime" lang="zh">
        <svg viewBox="0 0 16 16"><rect width="16" height="16" rx="2" fill="#d84b1c"/><path d="M12 4H6C3 4 3 8 6 8h4c3 0 3 4 0 4H4" stroke="#fff" stroke-width="2" fill="none"/></svg>
        <span>中</span>
        <svg viewBox="0 0 16 16"><path d="M10 2c5 4 3 12-4 12-2 0-4-1-5-3 6 1 10-3 9-9z" fill="#4a8ac6"/></svg>
        <svg viewBox="0 0 16 16"><circle cx="5" cy="5" r="2" fill="none" stroke="#4a8ac6"/><path d="M10 9v2l-2 3" stroke="#4a8ac6" stroke-width="2" fill="none"/></svg>
        <svg viewBox="0 0 16 16"><path d="M0 3h16v11H0z" fill="#4a8ac6"/><path d="M2 6h12M2 9h12" stroke="#fff" stroke-dasharray="2 1"/><path d="M4 12h8" stroke="#fff"/></svg>
        <svg viewBox="0 0 16 16"><circle cx="8" cy="5" r="3" fill="#aaa"/><path d="M4 14v-3l2-2h4l2 2v3z" fill="#aaa"/></svg>
        <svg viewBox="0 0 16 16"><path d="M5 2c2 2 4 2 6 0l5 3-2 4-2-1v7H4V8L2 9 0 5z" fill="#4a8ac6"/></svg>
        <svg viewBox="0 0 16 16"><path d="M2 14l7-7" stroke="#4a8ac6" stroke-width="3"/><path d="M10 1c-3 1-4 5-2 7s6 1 7-3l-3 1-2-2z" fill="#4a8ac6"/></svg>
    </div>

    <footer class="taskbar">
        <button class="start" lang="zh">
            <svg viewBox="0 0 18 18"><path d="M3 3c2-1 4-1 6 0L8 8C6 7 4 7 2 8z" fill="#f0592a"/><path d="M10 3c2 1 4 1 6 0l-1 6c-2 1-4 1-6 0z" fill="#8cc63f"/><path d="M2 9c2-1 4-1 6 0l-1 6c-2-1-4-1-6 0z" fill="#4d9bf0"/><path d="M9 10c2 1 4 1 6 0l-1 5c-2 1-4 1-6 0z" fill="#fbd12e"/></svg>
            开始
        </button>
        <div class="quick">
            <i class="dots"></i>
            <button aria-label="Internet Explorer"><svg><use href="#ie"/></svg></button>
            <button aria-label="Firefox"><svg><use href="#firefox"/></svg></button>
            <button aria-label="Computer"><svg viewBox="0 0 16 16"><path d="M4 0h9v9H4z" fill="#bfe6ff" stroke="#e8f7ff"/><path d="M5 10h8l-1 5H4z" fill="#7fb6e8" stroke="#dff"/></svg></button>
            <button aria-label="Browser"><svg><use href="#ie"/></svg></button>
            <button aria-label="Movie"><svg viewBox="0 0 16 16"><path d="M2 1h12v14H2z" fill="#fff" stroke="#222"/><path d="M3 3h10" stroke="#222" stroke-width="2"/><path d="M4 9h3v3H4z" fill="#239"/><path d="M9 9h3v3H9z" fill="#c33"/></svg></button>
            <button aria-label="Mail"><svg viewBox="0 0 16 16"><path d="M2 3h9v11H2z" fill="#dff1ff" stroke="#4fa5e0"/><path d="M6 8c2-5 6-6 9-6l-2 9-6 1z" fill="#b6dffb" stroke="#2a78bb"/></svg></button>
            <button aria-label="Tiger"><svg viewBox="0 0 16 16"><path d="M2 2l4 1h4l4-1v8l-6 6-6-6z" fill="#f0a526" stroke="#7a430c"/><path d="M4 6l3 1M12 6L9 7M8 3v2M6 12l2-1 2 1" stroke="#3c1e05" fill="none"/></svg></button>
            <span class="chevrons">»</span>
            <i class="dots"></i>
        </div>
        <button class="task" lang="zh"><svg><use href="#firefox"/></svg>有没有画链轮的程...</button>
        <button class="task pressed"><svg><use href="#app"/></svg>AutoCAD Mechanic...</button>
        <div class="tray">
            <svg viewBox="0 0 16 16"><path d="M2 2h10v9H2z" fill="#27496e" stroke="#ccd"/><path d="M6 11h8v3H6z" fill="#9ab"/></svg>
            <svg viewBox="0 0 16 16"><circle cx="8" cy="8" r="6" fill="#777" stroke="#ccc"/></svg>
            <svg viewBox="0 0 16 16"><circle cx="8" cy="8" r="7" fill="#74b943"/><path d="M8 3v8M4 7l4-4 4 4" stroke="#fff" stroke-width="2" fill="none"/></svg>
            <svg viewBox="0 0 16 16"><path d="M5 1h10v8H5zM1 5h10v8H1z" fill="#4b6b90" stroke="#eef"/></svg>
            <time>14:24</time>
        </div>
    </footer>
    <div class="watermark" lang="zh"><b>三维网</b>www.3dportal.cn</div>
</body>
</html>
```
FILE: styles.css
```css
* {
    box-sizing: border-box;
}

body {
    margin: 0;
    height: 100vh;
    overflow: hidden;
    display: flex;
    flex-direction: column;
    font: 10px/12px "Liberation Mono", "Noto Sans CJK SC", monospace;
    color: #000;
    background:
        linear-gradient(90deg, transparent 0 2%, #8fae4d 3% 4%, #44512a 6% 14%, #3c90c4 15%, #4a5733 16% 19%, #d8e3c8 20% 21%, #7da43c 22% 25%, #3c4626 27% 42%, #4f6132 50% 72%, #8bb745 75% 78%, #53693b 80% 94%, #8bb745 96%, #44512a) top / 100% 6px no-repeat,
        linear-gradient(#4e6b2b, #70943f 12%, #3f5526 25%, #8bab4c 45%, #4d5f31 60%, #7c8272 80%, #6f675b);
}

button,
input,
select {
    font: inherit;
    color: inherit;
    margin: 0;
    padding: 0;
    border: 0;
    border-radius: 0;
    background: none;
}

button {
    display: flex;
    align-items: center;
    justify-content: center;
    flex: none;
}

svg {
    display: block;
    flex: none;
}

.defs {
    position: absolute;
}

.icon {
    width: 16px;
    height: 16px;
}

.arrow {
    border: 3px solid transparent;
    border-top-color: #aca899;
    border-bottom: 0;
}

.arrow-big {
    border-width: 4px;
    border-bottom: 0;
    border-top-color: #000;
    margin-top: 6px;
}

/* main window */
.window {
    flex: 1;
    min-height: 0;
    margin: 5px 2px 0 6px;
    display: flex;
    flex-direction: column;
    border: 3px solid #6678cf;
    border-top: 0;
    border-radius: 7px 7px 0 0;
    background: #ece9d8;
}

.titlebar {
    height: 29px;
    margin: 0 -3px;
    padding: 2px 4px 0 5px;
    display: flex;
    align-items: center;
    gap: 2px;
    border-radius: 7px 7px 0 0;
    background: linear-gradient(#6e85d2, #9db5f0 10%, #7e99e1 25%, #7b97e0 60%, #87a5ec 85%, #7892dd);
}

.titlebar h1 {
    flex: 1;
    margin: 0 0 0 2px;
    font-size: 13px;
    line-height: 16px;
    color: #dce6fb;
}

.caption {
    width: 21px;
    height: 21px;
    margin-left: 1px;
    border: 1px solid #c3d0f6;
    border-radius: 3px;
    background: linear-gradient(135deg, #7393ec, #4166d9);
    color: #fff;
}

.caption svg {
    width: 12px;
    height: 12px;
}

.caption-close {
    background: linear-gradient(135deg, #c88492, #ad5468);
}

.menubar {
    height: 20px;
    padding-left: 4px;
    display: flex;
    align-items: center;
    color: #a29f90;
}

.menubar > button {
    padding: 2px 6px 0;
}

.help-box {
    width: 200px;
    height: 18px;
    margin-left: auto;
    padding: 0 2px;
    background: #fff;
    border-left: 1px solid #7f9db9;
}

.help-box::placeholder {
    color: #a29f90;
    opacity: 1;
}

.help-tools {
    display: flex;
    height: 18px;
    border: 1px solid #8d8b80;
    border-radius: 3px;
}

.help-tools button {
    width: 18px;
}

.help-tools button + button {
    border-left: 1px solid #aca899;
}

.help-tools .search {
    width: 29px;
    gap: 3px;
}

.help-tools svg {
    width: 13px;
    height: 13px;
}

.help-tools .arrow {
    border-top-color: #555;
}

.mdi {
    display: flex;
    padding-left: 5px;
    background: #f0eee2;
}

.mdi button {
    width: 18px;
    height: 18px;
}

.mdi svg {
    width: 12px;
    height: 12px;
    stroke: #cbc8b8;
}

/* toolbars */
.toolbars {
    display: flex;
    height: 28px;
    border-top: 1px solid #fff;
}

.toolbar {
    display: flex;
    align-items: center;
    margin-right: 1px;
    padding: 0 3px 0 12px;
    border: 1px solid #fff;
    border-right-color: #aca899;
    border-bottom-color: #aca899;
}

.tool {
    position: relative;
    width: 23px;
    height: 22px;
}

.tool svg {
    width: 16px;
    height: 16px;
    overflow: hidden;
}

.tool svg text {
    font: bold 6px "Liberation Sans", sans-serif;
    fill: #1d3d66;
}

.tool svg .big {
    font-size: 9px;
}

.tool svg .txt {
    font-size: 8px;
    fill: #a98509;
}

.tool.more::after {
    content: "";
    position: absolute;
    right: 2px;
    bottom: 2px;
    border: 2px solid #000;
    border-left-color: transparent;
    border-top-color: transparent;
}

.node {
    fill: #1f6fae;
}

.tool-drop {
    width: 12px;
    height: 22px;
}

.sep {
    width: 6px;
    height: 20px;
    flex: none;
    background: linear-gradient(90deg, transparent 2px, #aca899 2px 3px, #fff 3px 4px, transparent 4px);
}

.layer-box {
    display: flex;
    align-items: center;
    width: 300px;
    height: 22px;
    padding-left: 3px;
    border: 1px solid #c4c0ae;
    border-right-color: #fff;
    border-bottom-color: #fff;
    color: #a29f90;
}

.layer-box svg {
    width: 70px;
    height: 16px;
}

.swatch {
    width: 11px;
    height: 11px;
    margin-right: 4px;
    border: 1px solid #000;
    background: #fff;
}

.layer-box select {
    flex: 1;
    appearance: none;
}

.layer-box .drop {
    width: 17px;
    height: 18px;
    background: #f4f2e8;
    border: 1px solid #dad7c9;
}

/* work area */
.workspace {
    flex: 1;
    min-height: 0;
    display: flex;
}

.dock {
    width: 26px;
    flex: none;
}

.dock-group {
    display: flex;
    flex-direction: column;
    padding: 10px 0 5px;
    border: 1px solid #fff;
    border-right-color: #aca899;
    border-bottom-color: #aca899;
}

.dock-group + .dock-group {
    padding-top: 11px;
}

.sep-h {
    height: 6px;
    margin: 0 3px;
    background: linear-gradient(transparent 2px, #aca899 2px 3px, #fff 3px 4px, transparent 4px);
}

.letter {
    font: 17px/20px "Liberation Sans", sans-serif;
}

.viewport {
    flex: 1;
    min-width: 0;
    display: flex;
    flex-direction: column;
    border-left: 2px solid #716f64;
    border-top: 1px solid #716f64;
}

.canvas-row {
    flex: 1;
    display: flex;
}

.canvas {
    position: relative;
    flex: 1;
    background: #000;
}

.vscroll {
    display: flex;
    flex-direction: column;
    width: 17px;
    padding-top: 1px;
    background: #f6f5ef;
}

.above {
    flex: 2;
}

.below {
    flex: 7;
}

.sb {
    width: 16px;
    height: 16px;
    border: 1px solid #9fb5ea;
    border-radius: 2px;
    background: linear-gradient(135deg, #dbe5fe, #b8cbf8);
    box-shadow: inset 0 0 0 1px #eef3ff;
}

.sb svg {
    width: 8px;
    height: 8px;
}

.ucs {
    position: absolute;
    left: 10px;
    bottom: 9px;
    width: 94px;
    height: 98px;
}

/* floating palette */
.palette {
    position: absolute;
    left: 728px;
    top: 58px;
    width: 79px;
    padding: 3px;
    border: 1px solid #f5f3ea;
    outline: 1px solid #aca899;
    outline-offset: -1px;
    background: #ece9d8;
}

.palette-title {
    display: flex;
    align-items: center;
    height: 17px;
    padding: 0 2px;
    overflow: hidden;
    background: #0a50d4;
    color: #fff;
    font-weight: bold;
    font-size: 11px;
}

.palette-title span {
    width: 53px;
    overflow: hidden;
}

.palette-title button {
    width: 15px;
    height: 13px;
    border: 1px solid #fff;
    border-right-color: #716f64;
    border-bottom-color: #716f64;
    background: #ece9d8;
    color: #000;
}

.palette-title svg {
    width: 9px;
    height: 9px;
}

.palette-tools {
    display: flex;
    height: 27px;
    align-items: center;
}

/* property page */
.dialog {
    position: absolute;
    left: 361px;
    top: 116px;
    width: 489px;
    display: flex;
    flex-direction: column;
    border: 3px solid #0c3fbe;
    border-top: 0;
    border-radius: 7px 7px 0 0;
    background: #ece9d8;
}

.dialog-title {
    height: 28px;
    margin: 0 -3px;
    padding: 0 4px 0 5px;
    display: flex;
    align-items: center;
    border-radius: 7px 7px 0 0;
    background: linear-gradient(#0a46c8, #3f8cf5 8%, #0757e6 22%, #0355e5 55%, #0468fb 85%, #0448c6);
}

.dialog-title h2 {
    flex: 1;
    margin: 0 0 0 4px;
    font-size: 13px;
    line-height: 16px;
    color: #fff;
    text-shadow: 1px 1px #0a2a80;
}

.dialog-close {
    width: 21px;
    height: 21px;
    border: 1px solid #fff;
    border-radius: 3px;
    background: linear-gradient(135deg, #eb8f73, #d24a22);
    color: #fff;
}

.dialog-close svg {
    width: 12px;
    height: 12px;
}

.dialog-body {
    display: flex;
    min-height: 240px;
    border-bottom: 1px solid #aca899;
    box-shadow: 0 1px #fff;
}

.pages {
    flex: none;
    width: 101px;
    margin: 0 0 1px;
    padding: 2px 0 0 8px;
    list-style: none;
    border-right: 1px solid #aca899;
    box-shadow: 1px 0 #fff;
}

.pages li {
    height: 19px;
    display: flex;
    align-items: center;
    padding-left: 10px;
}

.pages .current {
    padding-left: 0;
}

.pages .current::before {
    content: "";
    width: 10px;
    height: 6px;
    background: #0a246a;
    clip-path: polygon(0 0, 50% 50%, 0 100%);
}

.pages a {
    color: #000;
    text-decoration: none;
}

.page {
    flex: 1;
    min-width: 0;
    display: flex;
    align-items: flex-start;
    gap: 5px;
    padding: 15px 13px 0;
}

.preview {
    flex: none;
    width: 147px;
    margin-top: 5px;
    border: 1px solid #aca899;
    box-shadow: 1px 1px #fff, inset 1px 1px #fff;
}

.preview svg {
    width: 100%;
}

fieldset {
    flex: 1;
    min-width: 0;
    margin: 0;
    padding: 5px 8px 6px 7px;
    border: 1px solid #d0d0bf;
    border-radius: 4px;
}

legend {
    padding: 0 2px 0 0;
    color: #1c4f9f;
}

fieldset label {
    display: block;
    line-height: 14px;
}

.field {
    display: flex;
    height: 22px;
    margin: 4px 0 7px 38px;
    padding: 1px;
    border: 1px solid #7f9db9;
    background: #fff;
    box-shadow: inset 2px 2px #ece9d8, inset -1px -1px #ece9d8;
}

.field:last-child {
    margin-bottom: 0;
}

.field input {
    flex: 1;
    min-width: 0;
    padding: 0 0 3px;
    border-top: 1px solid #716f64;
    border-left: 1px solid #716f64;
    outline: 0;
}

.field .selected {
    background: linear-gradient(#316ac5, #316ac5) 0 1px / 13px 12px no-repeat;
    color: #fff;
}

.field button {
    width: 20px;
    border: 1px solid #fff;
    border-right-color: #716f64;
    border-bottom-color: #716f64;
    background: #ece9d8;
}

.field button svg {
    width: 16px;
    height: 12px;
}

.dialog-buttons {
    display: flex;
    justify-content: flex-end;
    gap: 14px;
    padding: 12px;
}

.dialog-buttons button {
    width: 73px;
    height: 22px;
    gap: 4px;
    border: 1px solid #1c3f66;
    border-radius: 3px;
    background: linear-gradient(#fff, #f4f3ee 70%, #dedbd0);
}

.dialog-buttons button:first-child {
    margin-right: -12px;
}

.dialog-buttons svg {
    width: 8px;
    height: 8px;
    fill: none;
    stroke: currentColor;
}

.dialog-buttons button:disabled {
    color: #a6a596;
    border-color: #c9c7ba;
    background: #f5f4ea;
}

.dialog-buttons .default {
    box-shadow: inset 0 0 0 2px #a3bdf0;
}

.dialog-buttons .cjk {
    font-size: 12px;
}

/* layout tabs */
.tabs {
    display: flex;
    height: 17px;
    border-bottom: 1px solid #fff;
}

.tab-nav {
    display: flex;
    padding-left: 1px;
}

.tab-nav button {
    width: 15px;
    border: 1px solid #fff;
    border-right-color: #c4c0ae;
    border-bottom-color: #aca899;
}

.tab-nav svg {
    width: 10px;
    height: 10px;
    fill: #aca899;
}

.tab {
    position: relative;
    padding: 0 9px 0 8px;
    border-bottom: 1px solid #aca899;
}

.tab::after {
    content: "";
    position: absolute;
    top: 0;
    right: 0;
    height: 100%;
    border-right: 1px solid #444;
    transform: skewX(-20deg);
}

.tab.active {
    padding: 0 10px;
    background: #000;
    border: 0;
    color: #fff;
    clip-path: polygon(0 0, 100% 0, 90% 100%, 10% 100%);
}

.hscroll {
    display: flex;
    width: 415px;
    margin: 0 18px 0 auto;
    background: #f6f5ef;
}

.before {
    flex: 7;
}

.after {
    flex: 6;
}

.splitter {
    width: 5px;
    margin-right: 1px;
    border: 1px solid #c4c0ae;
    border-radius: 2px;
    background: #ece9d8;
}

/* command window */
.command {
    display: flex;
    margin-top: 6px;
    padding: 8px 5px 2px 6px;
    border-top: 2px solid #000;
    border-bottom: 1px solid #aca899;
}

.command-grip {
    width: 7px;
    margin-right: 4px;
    border: 1px solid #fff;
    border-right-color: #aca899;
    background: linear-gradient(90deg, transparent 2px, #aca899 2px 3px, #fff 3px 4px, transparent 4px);
}

.command-box {
    flex: 1;
    background: #fff;
    border-top: 1px solid #000;
    border-left: 1px solid #000;
}

.command-history {
    display: flex;
    justify-content: space-between;
    height: 24px;
    border-bottom: 1px solid #9b988a;
    font: 13px/19px "Liberation Mono", monospace;
}

.mini-scroll .sb {
    width: 16px;
    height: 11px;
}

.mini-scroll svg {
    width: 6px;
    height: 6px;
}

.command-line {
    display: flex;
    height: 19px;
    padding: 1px 19px 0 0;
    background: linear-gradient(90deg, transparent calc(100% - 17px), #ece9d8 0);
}

.command-line input {
    flex: 1;
    outline: 0;
}

.track {
    width: 17px;
    background: #f6f5ef;
}

/* status bar */
.statusbar {
    display: flex;
    align-items: center;
    gap: 4px;
    height: 24px;
    padding: 2px 1px 1px 5px;
    border-top: 1px solid #fff;
}

.coords {
    width: 150px;
    padding: 4px 1px 2px;
    border: 1px solid #aca899;
    border-right-color: #fff;
    border-bottom-color: #fff;
}

.statusbar button {
    height: 19px;
    padding: 2px 1px 0;
    border: 1px solid #fff;
    border-right-color: #aca899;
    border-bottom-color: #aca899;
}

.statusbar .on {
    border-color: #000 #fff #fff #000;
}

.status-tray {
    display: flex;
    gap: 4px;
    margin-left: auto;
    padding: 1px 3px;
    border: 1px solid #aca899;
    border-right-color: #fff;
    border-bottom-color: #fff;
}

.status-tray svg {
    width: 16px;
    height: 16px;
}

.status-tray + .arrow-big {
    margin-left: 1px;
}

.resize {
    width: 12px;
    height: 12px;
    align-self: flex-end;
}

/* input method bar */
.ime {
    position: absolute;
    right: 88px;
    bottom: 41px;
    display: flex;
    align-items: center;
    gap: 4px;
    height: 22px;
    padding: 0 7px 0 4px;
    border: 1px solid #a8c4d4;
    background: #f8fbfd;
    font: bold 16px/18px "Noto Sans CJK SC", sans-serif;
    color: #4a8ac6;
}

.ime svg {
    width: 16px;
    height: 16px;
}

/* task bar */
.taskbar {
    display: flex;
    align-items: center;
    height: 33px;
    padding-top: 2px;
    background: linear-gradient(#5a70cc, #3a78ea 12%, #2a63da 30%, #245bdb 80%, #1b45a8);
    color: #fff;
}

.start {
    width: 97px;
    height: 29px;
    gap: 6px;
    padding-right: 14px;
    border-radius: 0 10px 12px 0;
    background: linear-gradient(#72b56c, #3d8b3c 20%, #358436 75%, #266b29);
    box-shadow: inset -3px 0 4px #1e5a22;
    font: italic 19px/24px "Noto Sans CJK SC", sans-serif;
}

.start svg {
    width: 19px;
    height: 19px;
}

.quick {
    display: flex;
    align-items: center;
    width: 217px;
    padding-left: 9px;
}

.quick button {
    width: 23px;
}

.quick svg,
.task svg {
    width: 16px;
    height: 16px;
}

.dots {
    width: 5px;
    height: 18px;
    margin-right: 4px;
    background: radial-gradient(circle at 1px 1px, #1740a0 1px, transparent 2px) 0 0 / 4px 4px;
}

.chevrons {
    margin: -12px 0 0 auto;
    padding-right: 6px;
    font-size: 14px;
    color: #cfe0ff;
}

.task {
    width: 159px;
    height: 24px;
    margin-left: 2px;
    padding-left: 9px;
    justify-content: flex-start;
    gap: 4px;
    border-radius: 2px;
    background: linear-gradient(#5b9cf8, #3c81f3 20%, #3a7cee);
    font: 12px/14px "Liberation Mono", "Noto Sans CJK SC", monospace;
}

.task.pressed {
    background: #1e52b7;
    box-shadow: inset 1px 1px 2px #123a8c;
    font-size: 10px;
}

.tray {
    display: flex;
    align-items: center;
    gap: 3px;
    width: 130px;
    height: 100%;
    margin-left: auto;
    padding: 0 14px 0 9px;
    border-left: 1px solid #0a3d9c;
    background: linear-gradient(#1a7fe0, #1499ee 20%, #1290e8 80%, #0f6cc0);
    box-shadow: inset 1px 1px #3fb4f5;
}

.tray svg {
    width: 15px;
    height: 15px;
}

.tray time {
    margin-left: auto;
}

.watermark {
    position: absolute;
    right: 18px;
    bottom: 2px;
    font: bold 15px/22px "DejaVu Sans", "Noto Sans CJK SC", sans-serif;
    color: #fff;
    -webkit-text-stroke: 2px #e02020;
    paint-order: stroke fill;
}

.watermark b {
    font: bold 18px/22px "Noto Sans CJK SC", sans-serif;
}
```
